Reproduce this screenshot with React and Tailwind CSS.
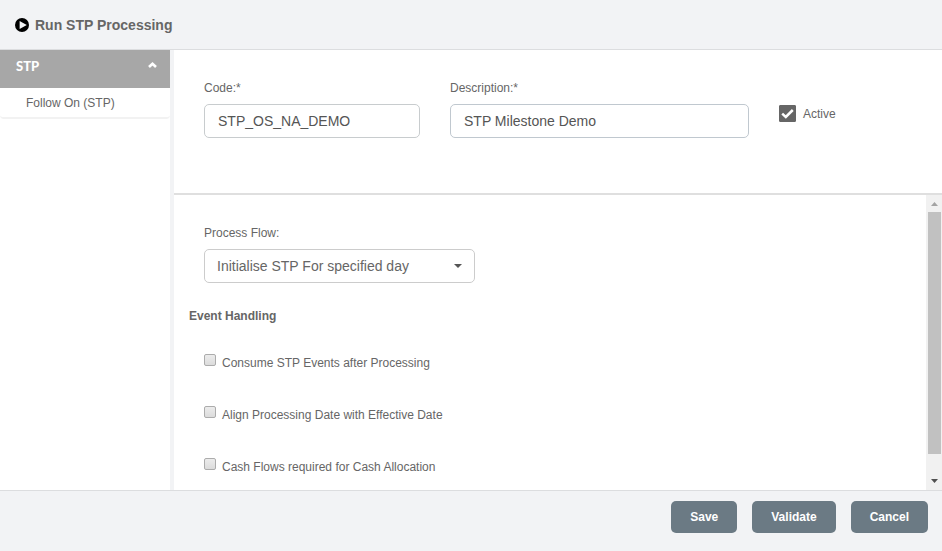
const CONTROL =
  "h-[34px] w-full rounded-[5px] border bg-white text-sm";
const BUTTON =
  "h-8 rounded-[5px] bg-[#6b7a84] px-[19px] text-xs font-bold text-white";

const EVENT_OPTIONS = [
  { id: "consume", label: "Consume STP Events after Processing" },
  { id: "align", label: "Align Processing Date with Effective Date" },
  { id: "cash", label: "Cash Flows required for Cash Allocation" },
];

function Header() {
  return (
    <header className="flex h-[50px] items-center gap-1.5 border-b border-[#dcdddf] bg-[#f2f3f5] px-[15px]">
      <svg className="size-3.5" viewBox="0 0 14 14" aria-hidden="true">
        <circle cx="7" cy="7" r="7" fill="#000" />
        <path d="M4.600 2.900v8.200L11.800 7z" fill="#f2f3f5" />
      </svg>
      <h1 className="text-sm leading-5 font-bold text-[#666]">
        Run STP Processing
      </h1>
    </header>
  );
}

function Sidebar() {
  return (
    <nav className="w-[170px] shrink-0 bg-white">
      <button
        type="button"
        className="flex h-[38px] w-full items-start justify-between bg-[#a7a7a7] pt-2 pr-[13px] pl-4 font-['Lato',sans-serif] text-[13px] leading-4 font-black text-white"
      >
        STP
        <svg className="mt-[3px] h-2 w-[9px]" viewBox="0 0 9 8" aria-hidden="true">
          <path
            d="M1 6 4.500 2.700 8 6"
            fill="none"
            stroke="#fff"
            strokeWidth="2.6"
          />
        </svg>
      </button>
      <a
        href="#follow-on"
        className="block h-[31px] rounded-b border-b-2 border-[#f2f2f2] pt-[7px] pl-[26px] text-xs leading-4"
      >
        Follow On (STP)
      </a>
    </nav>
  );
}

function Details() {
  return (
    <section className="flex gap-[30px] border-b-2 border-[#dfdfdf] bg-white px-[30px] pt-[30px] pb-[55px]">
      <div className="flex w-[216px] flex-col gap-2">
        <label htmlFor="code" className="text-xs leading-4">
          Code:*
        </label>
        <input
          id="code"
          defaultValue="STP_OS_NA_DEMO"
          className={`${CONTROL} border-[#c8ccce] px-[13px] text-[#555]`}
        />
      </div>
      <div className="flex w-[299px] flex-col gap-2">
        <label htmlFor="description" className="text-xs leading-4">
          Description:*
        </label>
        <input
          id="description"
          defaultValue="STP Milestone Demo"
          className={`${CONTROL} border-[#c0c8cf] px-[13px] text-[#555]`}
        />
      </div>
      <label className="mt-[25px] flex h-[17px] items-center gap-[7px] text-xs leading-[18px]">
        <span className="grid size-[17px]">
          <input
            type="checkbox"
            defaultChecked
            className="peer col-start-1 row-start-1 size-[17px] appearance-none rounded-[1px] border border-[#666] checked:bg-[#666]"
          />
          <svg
            className="pointer-events-none invisible col-start-1 row-start-1 size-[17px] peer-checked:visible"
            viewBox="0 0 17 17"
            aria-hidden="true"
          >
            <path
              d="M3.200 8.600 6.800 12 13.800 5"
              fill="none"
              stroke="#fff"
              strokeWidth="2.5"
            />
          </svg>
        </span>
        Active
      </label>
    </section>
  );
}

function Processing() {
  return (
    <section className="flex-1 px-[30px] pt-[30px] pb-[15px]">
      <div className="flex w-[271px] flex-col gap-2">
        <label htmlFor="flow" className="text-xs leading-4">
          Process Flow:
        </label>
        <div className="grid items-center">
          <select
            id="flow"
            className={`${CONTROL} col-start-1 row-start-1 appearance-none border-[#ccc] pr-8 pl-3 text-[#666]`}
          >
            <option>Initialise STP For specified day</option>
          </select>
          <svg
            className="pointer-events-none col-start-1 row-start-1 mr-[13px] h-1 w-2 justify-self-end"
            viewBox="0 0 8 4"
            aria-hidden="true"
          >
            <path d="M0 0h8L4 4z" fill="#555" />
          </svg>
        </div>
      </div>
      <fieldset>
        <legend className="-ml-[15px] pt-[25px] text-xs leading-4 font-bold">
          Event Handling
        </legend>
        <div className="flex flex-col gap-9 pt-[31px]">
          {EVENT_OPTIONS.map((option) => (
            <label
              key={option.id}
              className="flex h-4 items-start gap-1.5 text-xs leading-4"
            >
              <input
                type="checkbox"
                className="-mt-px size-3 appearance-none rounded-xs border border-[#acacac] bg-linear-to-b from-[#ececec] to-[#dcdcdc] checked:bg-[#666]"
              />
              {option.label}
            </label>
          ))}
        </div>
      </fieldset>
    </section>
  );
}

function ScrollTrack() {
  return (
    <div
      className="flex w-4 shrink-0 flex-col items-end bg-[#f1f1f1] pr-px"
      aria-hidden="true"
    >
      <svg className="h-[17px] w-[13px]" viewBox="0 0 13 17">
        <path d="M3 11h7L6.500 7z" fill="#a3a3a3" />
      </svg>
      <div className="w-[13px] grow-[242] bg-[#c1c1c1]" />
      <div className="grow-[19]" />
      <svg className="h-[17px] w-[13px]" viewBox="0 0 13 17">
        <path d="M3 6h7L6.500 10z" fill="#505050" />
      </svg>
    </div>
  );
}

export default function App() {
  return (
    <div className="flex min-h-screen flex-col bg-[#f2f3f5] font-['Liberation_Sans',Arial,sans-serif] text-[#666]">
      <Header />
      <div className="flex flex-1 gap-1">
        <Sidebar />
        <main className="flex min-w-0 flex-1 flex-col">
          <Details />
          <div className="flex flex-1 bg-white">
            <Processing />
            <ScrollTrack />
          </div>
        </main>
      </div>
      <footer className="flex justify-end gap-[15px] border-t border-[#dcdddf] pt-2.5 pr-3.5 pb-[18px]">
        <button type="button" className={BUTTON}>
          Save
        </button>
        <button type="button" className={BUTTON}>
          Validate
        </button>
        <button type="button" className={BUTTON}>
          Cancel
        </button>
      </footer>
    </div>
  );
}
